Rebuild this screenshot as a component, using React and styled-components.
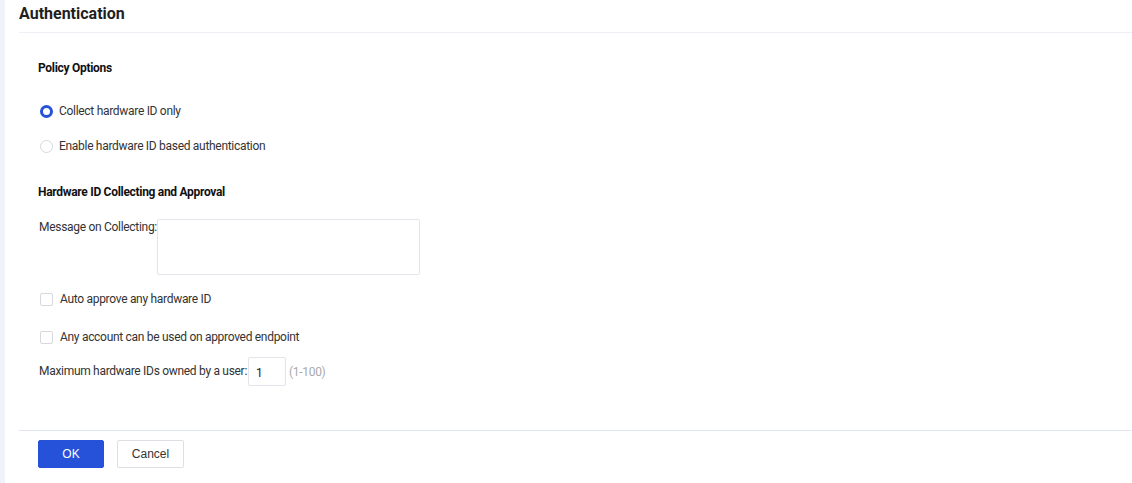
import React from 'react'
import styled, { createGlobalStyle } from 'styled-components'

const Global = createGlobalStyle`
  html, body { margin: 0; padding: 0; background: #fff; }
  body { font-family: Roboto, "Liberation Sans", sans-serif; color: #333; }
`

const App = () => {
  return (
    <Page>
      <Global />
      <Side />
      <Main>
        <Header>
          <Title>Authentication</Title>
        </Header>
        <Form>
          <Section>Policy Options</Section>
          <RadioRow gap={26}>
            <Radio checked />
            <Label>Collect hardware ID only</Label>
          </RadioRow>
          <RadioRow gap={18}>
            <Radio />
            <Label>Enable hardware ID based authentication</Label>
          </RadioRow>
          <Section top={29}>Hardware ID Collecting and Approval</Section>
          <MessageRow>
            <FieldLabel>Message on Collecting:</FieldLabel>
            <TextArea />
          </MessageRow>
          <CheckRow gap={16}>
            <Check />
            <Label>Auto approve any hardware ID</Label>
          </CheckRow>
          <CheckRow gap={21}>
            <Check />
            <Label>Any account can be used on approved endpoint</Label>
          </CheckRow>
          <MaxRow>
            <FieldLabel>Maximum hardware IDs owned by a user:</FieldLabel>
            <NumBox>1</NumBox>
            <Hint>(1-100)</Hint>
          </MaxRow>
        </Form>
        <Footer>
          <Button primary>OK</Button>
          <Button>Cancel</Button>
        </Footer>
      </Main>
    </Page>
  )
}

export default App

const Page = styled.div`
  display: flex;
  width: 1132px;
  height: 483px;
  overflow: hidden;
`
const Side = styled.div`
  width: 5px;
  flex-shrink: 0;
  background: #f0f2f9;
`
const Main = styled.div`
  flex: 1;
  padding-left: 14px;
  display: flex;
  flex-direction: column;
`
const Header = styled.div`
  height: 33px;
  flex-shrink: 0;
  border-bottom: 1px solid #eef0f5;
  box-sizing: border-box;
  padding-top: 4px;
`
const Title = styled.div`
  font-size: 16px;
  font-weight: 700;
  line-height: 20px;
  color: #1f1f1f;
`
const Form = styled.div`
  flex: 1;
  padding-left: 19px;
  padding-top: 27px;
  letter-spacing: -0.3px;
`
const Section = styled.div`
  font-size: 12px;
  font-weight: 700;
  color: #111;
  margin-top: ${p => p.top || 0}px;
  line-height: 17px;
`
const RadioRow = styled.div`
  display: flex;
  align-items: center;
  gap: 6px;
  margin-top: ${p => p.gap}px;
  padding-left: 2px;
  height: 17px;
`
const Radio = styled.span`
  width: 13px;
  height: 13px;
  border-radius: 50%;
  box-sizing: border-box;
  border: ${p => (p.checked ? '3.5px solid #2651d9' : '1px solid #d6d8de')};
  background: #fff;
`
const Label = styled.span`
  font-size: 12px;
  color: #333;
  line-height: 17px;
`
const MessageRow = styled.div`
  display: flex;
  align-items: flex-start;
  margin-top: 18px;
  padding-left: 1px;
`
const FieldLabel = styled.span`
  font-size: 12px;
  color: #333;
  line-height: 17px;
`
const TextArea = styled.div`
  width: 263px;
  height: 56px;
  border: 1px solid #e3e5ea;
  box-sizing: border-box;
  border-radius: 2px;
  margin-left: 0;
`
const CheckRow = styled.div`
  display: flex;
  align-items: center;
  gap: 7px;
  margin-top: ${p => p.gap}px;
  padding-left: 2px;
  height: 17px;
`
const Check = styled.span`
  width: 13px;
  height: 13px;
  border: 1px solid #d6d8de;
  border-radius: 2px;
  box-sizing: border-box;
`
const MaxRow = styled.div`
  display: flex;
  align-items: center;
  margin-top: 11px;
  padding-left: 1px;
`
const NumBox = styled.div`
  width: 38px;
  height: 29px;
  border: 1px solid #e3e5ea;
  border-radius: 2px;
  box-sizing: border-box;
  margin-left: 1px;
  font-size: 12px;
  color: #222;
  display: flex;
  align-items: center;
  padding-left: 7px;
  padding-top: 2px;
`
const Hint = styled.span`
  font-size: 12px;
  color: #aaa;
  margin-left: 3px;
`
const Footer = styled.div`
  height: 53px;
  flex-shrink: 0;
  box-sizing: border-box;
  border-top: 1px solid #e1e6ee;
  display: flex;
  align-items: flex-start;
  gap: 13px;
  padding-left: 19px;
  padding-top: 9px;
  margin-right: 1px;
`
const Button = styled.button`
  width: ${p => (p.primary ? 66 : 67)}px;
  height: 28px;
  border-radius: 2px;
  font-family: "Liberation Sans", Arial, sans-serif;
  font-size: 12px;
  border: 1px solid ${p => (p.primary ? '#2651d9' : '#dcdfe4')};
  background: ${p => (p.primary ? '#2651d9' : '#fff')};
  color: ${p => (p.primary ? '#fff' : '#333')};
  padding: 0;
`
